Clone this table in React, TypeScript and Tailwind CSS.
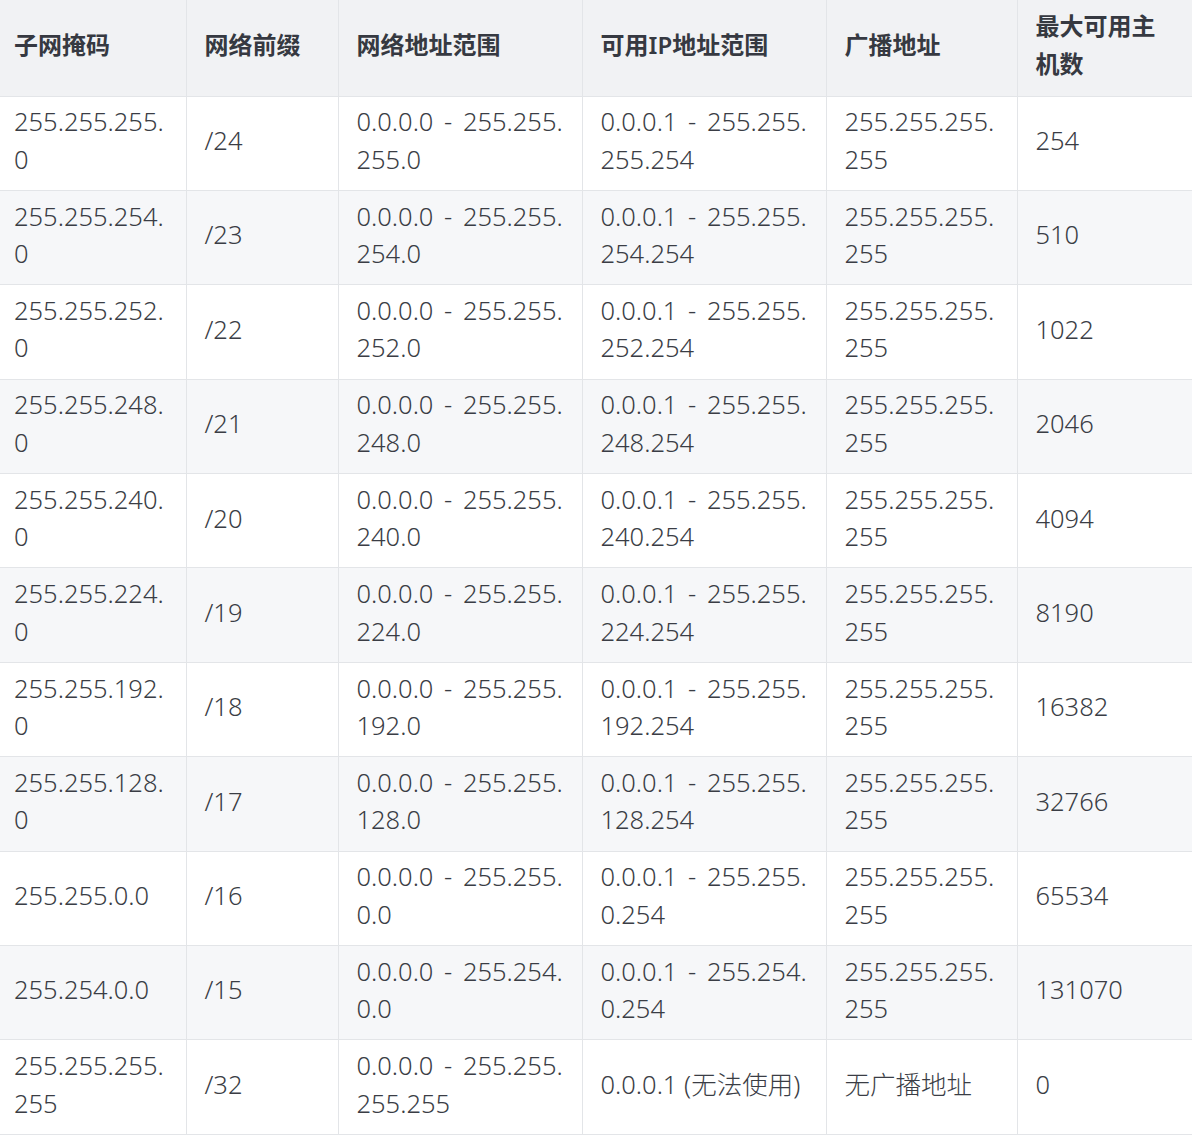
import React from "react";

const headers = ["子网掩码", "网络前缀", "网络地址范围", "可用IP地址范围", "广播地址", ["最大可用主", "机数"]];

const widths = ["w-[186px]", "w-[152px]", "w-[244px]", "w-[244px]", "w-[191px]", "w-[175px]"];

type Row = { mask: string[]; prefix: string; net: string[]; usable: string[]; bcast: string[]; hosts: string };

const mk = (m: string, p: string, hosts: string): Row => ({
  mask: [`255.255.${m}.`, "0"],
  prefix: p,
  net: ["0.0.0.0 - 255.255.", `${m}.0`],
  usable: ["0.0.0.1 - 255.255.", `${m}.254`],
  bcast: ["255.255.255.", "255"],
  hosts,
});

const rows: Row[] = [
  mk("255", "/24", "254"),
  mk("254", "/23", "510"),
  mk("252", "/22", "1022"),
  mk("248", "/21", "2046"),
  mk("240", "/20", "4094"),
  mk("224", "/19", "8190"),
  mk("192", "/18", "16382"),
  mk("128", "/17", "32766"),
  {
    mask: ["255.255.0.0"],
    prefix: "/16",
    net: ["0.0.0.0 - 255.255.", "0.0"],
    usable: ["0.0.0.1 - 255.255.", "0.254"],
    bcast: ["255.255.255.", "255"],
    hosts: "65534",
  },
  {
    mask: ["255.254.0.0"],
    prefix: "/15",
    net: ["0.0.0.0 - 255.254.", "0.0"],
    usable: ["0.0.0.1 - 255.254.", "0.254"],
    bcast: ["255.255.255.", "255"],
    hosts: "131070",
  },
  {
    mask: ["255.255.255.", "255"],
    prefix: "/32",
    net: ["0.0.0.0 - 255.255.", "255.255"],
    usable: ["0.0.0.1 (无法使用)"],
    bcast: ["无广播地址"],
    hosts: "0",
  },
];

function Lines({ lines }: { lines: string[] }) {
  return (
    <>
      {lines.map((l, i) => (
        <div key={i} className={`whitespace-pre ${l.includes(" - ") ? "[word-spacing:4px]" : ""}`}>
          {l}
        </div>
      ))}
    </>
  );
}

export default function App() {
  const font = { fontFamily: '"Noto Sans", "Noto Sans CJK SC", sans-serif' };
  return (
    <div className="w-[1192px] h-[1144px] bg-white overflow-hidden" style={font}>
      <table className="table-fixed border-collapse w-[1192px]">
        <colgroup>
          {widths.map((w, i) => (
            <col key={i} className={w} />
          ))}
        </colgroup>
        <thead>
          <tr className="h-[96px] bg-[#f1f2f4]">
            {headers.map((h, i) => (
              <th
                key={i}
                className={`border border-[#e3e5e8] border-t-0 text-left align-middle font-semibold text-[24px] leading-[38px] text-[#363941] pb-[6px] ${
                  i === 0 ? "pl-[14px] border-l-0" : "pl-[18px]"
                } ${i === 5 ? "border-r-0" : ""}`}
              >
                {Array.isArray(h) ? <Lines lines={h} /> : h}
              </th>
            ))}
          </tr>
        </thead>
        <tbody>
          {rows.map((r, ri) => {
            const cells = [r.mask, [r.prefix], r.net, r.usable, r.bcast, [r.hosts]];
            return (
              <tr key={ri} className={`h-[94.4px] ${ri % 2 === 1 ? "bg-[#f6f7f9]" : "bg-white"}`}>
                {cells.map((c, ci) => (
                  <td
                    key={ci}
                    className={`border border-[#e3e5e8] align-middle font-light text-[25.5px] leading-[37.5px] text-[#3a3d45] pb-[5px] ${
                      ci === 0 ? "pl-[14px] border-l-0" : "pl-[18px]"
                    } ${ci === 5 ? "border-r-0" : ""}`}
                  >
                    <Lines lines={c} />
                  </td>
                ))}
              </tr>
            );
          })}
        </tbody>
      </table>
    </div>
  );
}
